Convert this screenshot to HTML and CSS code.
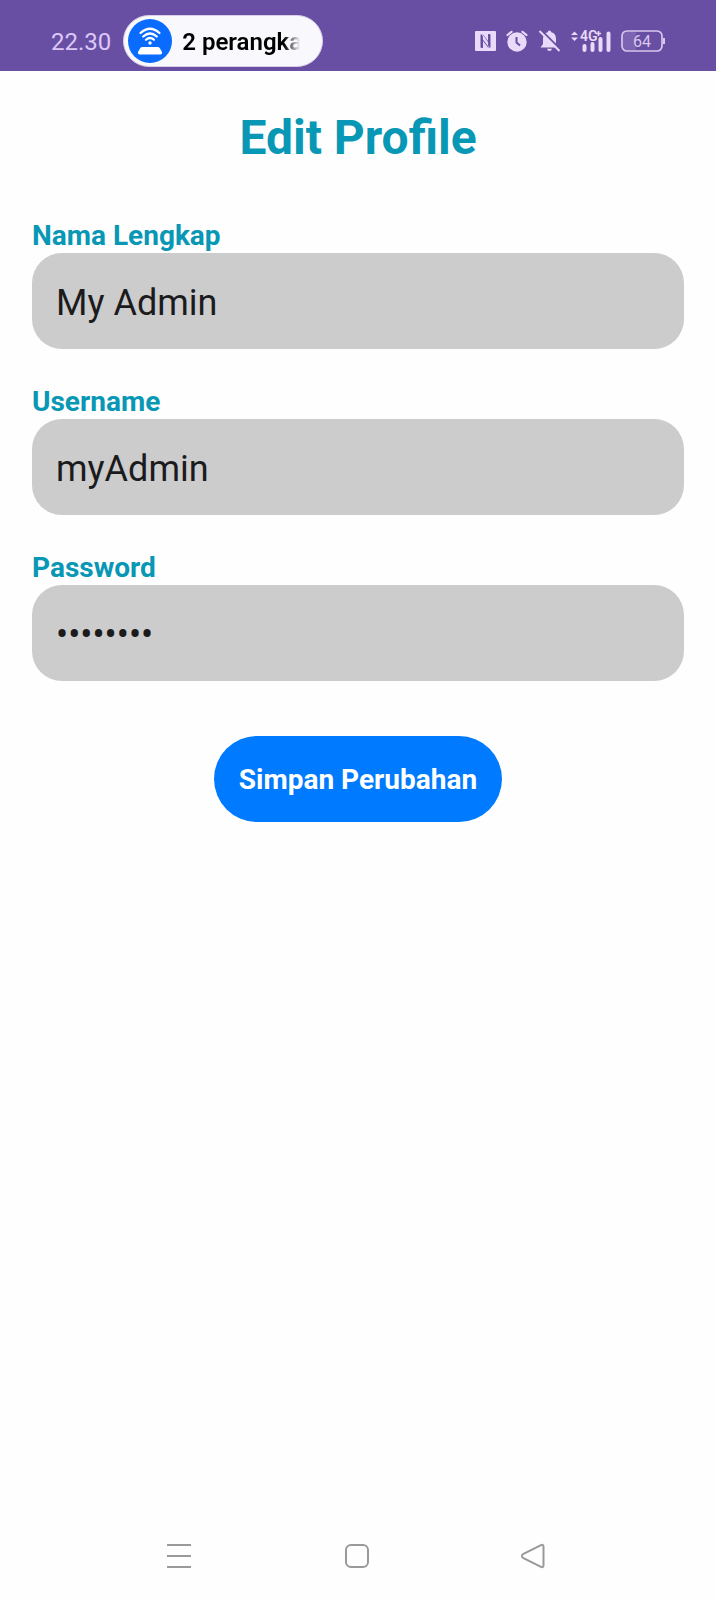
FILE: index.html
```html
<!DOCTYPE html>
<html lang="id">
<head>
<meta charset="utf-8">
<meta name="viewport" content="width=device-width, initial-scale=1">
<title>Edit Profile</title>
<link rel="stylesheet" href="styles.css">
</head>
<body class="screen">
<header class="status">
  <time class="clock">22.30</time>
  <div class="pill">
    <svg class="hotspot" viewBox="0 0 44 44" aria-hidden="true">
      <circle cx="22" cy="22" r="22" fill="#0a6cff"/>
      <g fill="none" stroke="#fff" stroke-width="2.200" stroke-linecap="round">
        <path d="M12.500 14Q22 5.500 31.500 14"/>
        <path d="M15.200 17.500Q22 11.500 28.800 17.500"/>
        <path d="M18 20.800Q22 17.200 26 20.800"/>
      </g>
      <circle cx="22" cy="24" r="1.700" fill="#fff"/>
      <path d="M14 28H30Q31.500 28 32 29.500L34 33Q34.500 35.500 32 35.500H12Q9.500 35.500 10 33L12 29.500Q12.500 28 14 28Z" fill="#fff"/>
    </svg>
    <span class="pill-text">2 perangka</span>
  </div>
  <div class="icons">
    <svg width="21" height="20" viewBox="0 0 21 20" aria-label="NFC">
      <rect width="21" height="20" rx="1" fill="#e8daf8"/>
      <path d="M5.500 3.500H8L13 10V3.500H15.500V16.500H13L8 10V16.500H5.500Z" fill="#684fa3"/>
      <path d="M7.200 3L14 12.500V16.500L7.200 7.500Z" fill="#e8daf8"/>
      <path d="M7 5V17M14 3V15" stroke="#684fa3" stroke-width="1.800"/>
    </svg>
    <svg width="22" height="22" viewBox="0 0 22 22" aria-label="Alarm">
      <circle cx="11" cy="12" r="9.700" fill="#e8daf8"/>
      <path d="M1.500 5L5.500 1.800M20.500 5L16.500 1.800" stroke="#e8daf8" stroke-width="2.200" stroke-linecap="round"/>
      <path d="M10.500 7V12.500L14 15.500" fill="none" stroke="#684fa3" stroke-width="2"/>
    </svg>
    <svg class="bell" width="23" height="22" viewBox="0 0 23 22" aria-label="Senyap">
      <path d="M11.500 0.500Q13.100 0.500 13.300 2.300Q18 3.500 18 9V14L20.500 17.500H2.500L5 14V9Q5 3.500 9.700 2.300Q9.900 0.500 11.500 0.500Z" fill="#e8daf8"/>
      <path d="M9 18.700H14Q13.500 21 11.500 21T9 18.700Z" fill="#e8daf8"/>
      <path d="M3 0L23 20" stroke="#684fa3" stroke-width="2"/>
      <path d="M1.500 1L21.500 21" stroke="#e8daf8" stroke-width="2"/>
    </svg>
    <svg width="40" height="24" viewBox="0 0 40 24" aria-label="4G+">
      <path d="M0 6L3.500 2.500L7 6ZM0 8.500L3.500 12L7 8.500Z" fill="#e8daf8"/>
      <path d="M13.500 17V21M21.500 15V21M29.500 10V21M37.500 4.500V21" stroke="#e8daf8" stroke-width="4" stroke-linecap="round"/>
      <text class="network" x="9" y="12">4G</text>
      <path d="M27.500 2V7M25 4.500H30" stroke="#e8daf8" stroke-width="1.500"/>
    </svg>
    <svg width="44" height="22" viewBox="0 0 44 22" aria-label="Baterai 64%">
      <path d="M6 2H15V20H6Q2 20 2 15V7Q2 2 6 2Z" fill="#7d64b2"/>
      <rect x="1" y="1" width="40" height="20" rx="5" fill="none" stroke="#d8c8ee" stroke-width="1.700"/>
      <path d="M43 8V14" stroke="#d8c8ee" stroke-width="2"/>
      <text class="level" x="21" y="17">64</text>
    </svg>
  </div>
</header>
<main class="content">
  <h1 class="title">Edit Profile</h1>
  <form class="form">
    <div class="field">
      <label class="label" for="name">Nama Lengkap</label>
      <input class="input" id="name" type="text" value="My Admin">
    </div>
    <div class="field">
      <label class="label" for="username">Username</label>
      <input class="input" id="username" type="text" value="myAdmin">
    </div>
    <div class="field">
      <label class="label" for="password">Password</label>
      <input class="input" id="password" type="password" value="password">
    </div>
    <button class="save" type="button">Simpan Perubahan</button>
  </form>
</main>
<nav class="nav">
  <button class="nav-button" type="button" aria-label="Aplikasi terbaru">
    <svg width="32" height="32" viewBox="0 0 32 32"><path d="M4 5H28M4 16H28M4 27H28"/></svg>
  </button>
  <button class="nav-button" type="button" aria-label="Beranda">
    <svg width="32" height="32" viewBox="0 0 32 32"><rect x="4" y="5" width="22" height="22" rx="5"/></svg>
  </button>
  <button class="nav-button" type="button" aria-label="Kembali">
    <svg width="32" height="32" viewBox="0 0 32 32"><path d="M2 14.200L20 5.200Q22.500 4 22.500 7V25Q22.500 28 20 26.800L2 17.800Q-0.500 16 2 14.200Z"/></svg>
  </button>
</nav>
</body>
</html>
```
FILE: styles.css
```css
* {
  box-sizing: border-box;
}

.screen {
  display: flex;
  flex-direction: column;
  min-height: 100vh;
  margin: 0;
  background: #fefefe;
  font-family: Roboto, "Liberation Sans", sans-serif;
}

.status {
  display: flex;
  align-items: center;
  padding: 15px 51px 4px;
  background: #684fa3;
}

.clock {
  margin-right: 12px;
  padding-top: 2px;
  color: #dcc8f8;
  font-size: 24px;
}

.pill {
  display: flex;
  align-items: center;
  gap: 10px;
  width: 200px;
  height: 52px;
  padding: 4px;
  border: 1px solid #d9cfea;
  border-radius: 26px;
  background: #f9f8fc;
}

.hotspot {
  flex: none;
  width: 44px;
  height: 44px;
}

.pill-text {
  padding-top: 2px;
  color: #000;
  font-size: 24px;
  font-weight: 600;
  white-space: nowrap;
  mask-image: linear-gradient(to right, #000 102px, transparent 118px);
}

.icons {
  display: flex;
  align-items: center;
  gap: 10px;
  margin-left: auto;
}

.network {
  fill: #e8daf8;
  font-size: 14px;
  font-weight: 600;
}

.level {
  fill: #d8c8ee;
  font-size: 16px;
  text-anchor: middle;
}

.content {
  flex: 1;
  padding: 39px 32px;
}

.title {
  margin: 0 0 53px;
  color: #0897b5;
  font-size: 48px;
  font-weight: 700;
  line-height: 56px;
  text-align: center;
}

.form {
  display: flex;
  flex-direction: column;
  gap: 36px;
}

.field {
  display: flex;
  flex-direction: column;
}

.label {
  align-self: flex-start;
  color: #0897b5;
  font-size: 28px;
  font-weight: 700;
  line-height: 34px;
}

.input {
  width: 100%;
  height: 96px;
  padding: 4px 24px 0;
  border: 0;
  border-radius: 30px;
  outline: 0;
  background: #ccc;
  color: #1b1b1d;
  font-family: inherit;
  font-size: 36px;
}

.save {
  align-self: center;
  margin-top: 19px;
  padding: 27px 25px 25px;
  border: 0;
  border-radius: 43px;
  background: #007bff;
  color: #fff;
  font-family: inherit;
  font-size: 28px;
  font-weight: 700;
  line-height: 34px;
}

.nav {
  display: grid;
  grid-template-columns: repeat(3, 1fr);
  padding: 0 12.5%;
}

.nav-button {
  display: flex;
  justify-content: center;
  padding: 28px 0;
  border: 0;
  background: none;
}

.nav-button svg {
  fill: none;
  stroke: #999;
  stroke-width: 2;
}
```
